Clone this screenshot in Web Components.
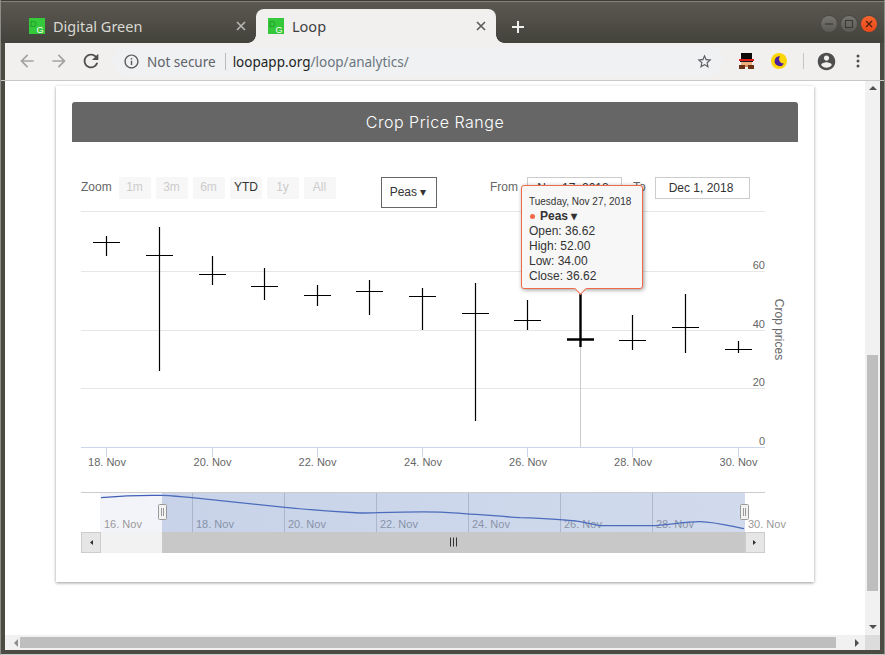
<!DOCTYPE html>
<html>
<head>
<meta charset="utf-8">
<title>Loop</title>
<style>
  html, body { margin: 0; padding: 0; background: #8a8a86; overflow: hidden; }
</style>
</head>
<body>
<browser-window>
  <browser-tabs slot="tabs"></browser-tabs>
  <browser-toolbar slot="toolbar"></browser-toolbar>
  <chart-card title-text="Crop Price Range">
    <chart-panel></chart-panel>
  </chart-card>
</browser-window>

<script>
class BrowserWindow extends HTMLElement {
  constructor () {
    super()
    this.attachShadow({ mode: 'open' })
  }

  connectedCallback () {
    this.shadowRoot.innerHTML = /* html */`
    <style>
      :host {
        display: flex;
        flex-direction: column;
        box-sizing: border-box;
        width: 885px;
        height: 655px;
        border-left: 1px solid #8d8d88;
        border-right: 1px solid #8d8d88;
        border-bottom: 1px solid #c9c9c6;
        background: #4b4a43;
      }
      .body {
        flex: 1;
        display: flex;
        flex-direction: column;
        min-height: 0;
        padding: 0 4px 4px 4px;
      }
      .view {
        flex: 1;
        display: flex;
        min-height: 0;
      }
      .page {
        flex: 1;
        background: #fff;
        overflow: hidden;
      }
      .vbar {
        width: 15px;
        position: relative;
        background: #f1f1f1;
        display: flex;
        flex-direction: column;
        align-items: center;
        justify-content: space-between;
      }
      .vbar .thumb {
        position: absolute;
        left: 2px;
        top: 274px;
        width: 11px;
        height: 236px;
        background: #bebebe;
      }
      .hbar {
        position: relative;
        height: 15px;
        display: flex;
        align-items: center;
        background: #f1f1f1;
      }
      .hbar .thumb {
        width: 816px;
        height: 11px;
        margin-left: 15px;
        background: #bebebe;
      }
      .corner {
        width: 15px;
        height: 15px;
        margin-left: auto;
        background: #dcdcdc;
      }
      .tri { width: 0; height: 0; border-style: solid; border-color: transparent; }
      .up { border-width: 0 4px 4px; border-bottom-color: #505050; margin-top: 5px; }
      .down { border-width: 4px 4px 0; border-top-color: #505050; margin-bottom: 6px; }
      .left { position: absolute; left: 9px; border-width: 4px 4px 4px 0; border-right-color: #8e8e8e; }
      .right { margin-left: 19px; border-width: 4px 0 4px 4px; border-left-color: #505050; }
    </style>
    <slot name="tabs"></slot>
    <slot name="toolbar"></slot>
    <div class="body">
      <div class="view">
        <div class="page"><slot></slot></div>
        <div class="vbar">
          <div class="tri up"></div>
          <div class="thumb"></div>
          <div class="tri down"></div>
        </div>
      </div>
      <div class="hbar">
        <div class="tri left"></div>
        <div class="thumb"></div>
        <div class="tri right"></div>
        <div class="corner"></div>
      </div>
    </div>
    `
  }
}

const faviconSvg = /* html */`
  <svg class="fav" width="16" height="16" viewBox="0 0 16 16">
    <rect width="16" height="16" fill="#35c83a"/>
    <text x="1" y="8.5" font-size="9" font-family="Liberation Sans, sans-serif" fill="#1f9a2a">D</text>
    <text x="7.5" y="15" font-size="9" font-family="Liberation Sans, sans-serif" fill="#fff">G</text>
  </svg>`

class BrowserTabs extends HTMLElement {
  constructor () {
    super()
    this.attachShadow({ mode: 'open' })
  }

  connectedCallback () {
    this.shadowRoot.innerHTML = /* html */`
    <style>
      :host {
        display: flex;
        align-items: flex-end;
        box-sizing: border-box;
        height: 43px;
        padding-left: 15px;
        background: linear-gradient(#5b5850, #44433b);
        border-top: 1px solid #3c3b36;
        box-shadow: inset 0 1px 0 #85837c;
        font: 14.5px "Noto Sans", sans-serif;
      }
      .tab {
        position: relative;
        box-sizing: border-box;
        width: 240px;
        height: 34px;
        display: flex;
        align-items: center;
        padding: 0 8px 0 12px;
        gap: 8px;
        color: #d9d8d2;
        border-radius: 8px 8px 0 0;
      }
      .tab.first { padding-left: 13px; }
      .tab.active {
        background: #f1f0ef;
        color: #3f3f3f;
      }
      .tab.active::before, .tab.active::after {
        content: '';
        position: absolute;
        bottom: 0;
        width: 8px;
        height: 8px;
      }
      .tab.active::before { left: -8px; background: radial-gradient(circle at 0 0, transparent 7.5px, #f1f0ef 8px); }
      .tab.active::after { right: -8px; background: radial-gradient(circle at 100% 0, transparent 7.5px, #f1f0ef 8px); }
      .name { flex: 1; padding-bottom: 1px; }
      .x { width: 14px; height: 14px; }
      .plus { margin: 0 0 9px 15px; width: 14px; height: 14px; }
      .controls {
        display: flex;
        gap: 4px;
        margin-left: auto;
        margin-right: 7px;
        align-self: flex-start;
        margin-top: 15px;
      }
      .wbtn {
        width: 16px;
        height: 16px;
        border-radius: 50%;
        background: linear-gradient(#76756f, #5a5953);
        box-shadow: 0 0 0 1px #494841;
        display: flex;
        align-items: center;
        justify-content: center;
      }
      .wbtn.close { background: linear-gradient(#f5642f, #e9481a); }
    </style>
    <div class="tab first">
      ${faviconSvg}
      <span class="name">Digital Green</span>
      <svg class="x" viewBox="0 0 14 14"><path d="M3 3l8 8M11 3l-8 8" stroke="#b9b8b2" stroke-width="1.6" fill="none"/></svg>
    </div>
    <div class="tab active">
      ${faviconSvg}
      <span class="name">Loop</span>
      <svg class="x" viewBox="0 0 14 14"><path d="M3 3l8 8M11 3l-8 8" stroke="#5a5a5a" stroke-width="1.6" fill="none"/></svg>
    </div>
    <svg class="plus" viewBox="0 0 14 14"><path d="M7 1v12M1 7h12" stroke="#f0f0ee" stroke-width="2" fill="none"/></svg>
    <div class="controls">
      <div class="wbtn"><svg width="10" height="10" viewBox="0 0 10 10"><path d="M1 5h8" stroke="#3b3a35" stroke-width="1.2"/></svg></div>
      <div class="wbtn"><svg width="10" height="10" viewBox="0 0 10 10"><rect x="1.5" y="1.5" width="7" height="7" fill="none" stroke="#3b3a35" stroke-width="1.1"/></svg></div>
      <div class="wbtn close"><svg width="10" height="10" viewBox="0 0 10 10"><path d="M2 2l6 6M8 2l-6 6" stroke="#4a1f0c" stroke-width="1.2"/></svg></div>
    </div>
    `
  }
}

class BrowserToolbar extends HTMLElement {
  constructor () {
    super()
    this.attachShadow({ mode: 'open' })
  }

  connectedCallback () {
    this.shadowRoot.innerHTML = /* html */`
    <style>
      :host {
        display: flex;
        align-items: center;
        box-sizing: border-box;
        height: 38px;
        padding: 0 0 1px 10px;
        background: #f1f0ef;
        border-bottom: 1px solid #c8c8c8;
        box-shadow: inset 4px 0 0 #4b4a43, inset -4px 0 0 #4b4a43;
        font: 13.5px "Noto Sans", sans-serif;
      }
      .btn {
        width: 32px;
        height: 28px;
        flex: none;
        display: flex;
        align-items: center;
        justify-content: center;
      }
      .omni {
        box-sizing: border-box;
        width: 610px;
        height: 29px;
        margin-left: 6px;
        padding: 0 10px;
        border-radius: 15px;
        background: #eff1f3;
        display: flex;
        align-items: center;
        color: #5f6368;
      }
      .omni > span { padding-top: 1px; }
      .sep { width: 1px; height: 17px; background: #b9bbbd; margin: 0 7px 0 9px; padding: 0 !important; }
      .url b { font-weight: 400; color: #1d1f21; }
      .url { color: #6b7680; }
      .star { margin-left: auto; display: flex; padding: 0 !important; }
      .bar { width: 1px; height: 16px; background: #c4c4c4; margin: 0 6px 0 8px; flex: none; }
    </style>
    <div class="btn"><svg width="20" height="20" viewBox="0 0 24 24"><path fill="#a3a3a3" d="M20 11H7.83l5.59-5.59L12 4l-8 8 8 8 1.41-1.41L7.83 13H20v-2z"/></svg></div>
    <div class="btn"><svg width="20" height="20" viewBox="0 0 24 24"><path fill="#a3a3a3" d="M12 4l-1.41 1.41L16.17 11H4v2h12.17l-5.58 5.59L12 20l8-8z"/></svg></div>
    <div class="btn"><svg width="22" height="22" viewBox="0 0 24 24"><path fill="#4f4f4f" d="M17.65 6.35A7.958 7.958 0 0 0 12 4c-4.42 0-7.99 3.58-7.99 8s3.57 8 7.99 8c3.73 0 6.84-2.55 7.73-6h-2.08A5.99 5.99 0 0 1 12 18c-3.31 0-6-2.69-6-6s2.69-6 6-6c1.66 0 3.14.69 4.22 1.78L13 11h7V4l-2.35 2.35z"/></svg></div>
    <div class="omni">
      <svg width="17" height="17" viewBox="0 0 24 24" style="flex:none;margin-right:7px"><path fill="#5a5d60" d="M11 7h2v2h-2zm0 4h2v6h-2zm1-9C6.48 2 2 6.48 2 12s4.48 10 10 10 10-4.48 10-10S17.52 2 12 2zm0 18c-4.41 0-8-3.59-8-8s3.59-8 8-8 8 3.59 8 8-3.59 8-8 8z"/></svg>
      <span>Not secure</span>
      <span class="sep"></span>
      <span class="url"><b>loopapp.org</b>/loop/analytics/</span>
      <span class="star"><svg width="17" height="17" viewBox="0 0 24 24"><path fill="#5a5d60" d="M22 9.24l-7.19-.62L12 2 9.19 8.63 2 9.24l5.46 4.73L5.82 21 12 17.27 18.18 21l-1.63-7.03L22 9.24zM12 15.4l-3.76 2.27 1-4.28-3.32-2.88 4.38-.38L12 6.1l1.71 4.04 4.38.38-3.32 2.88 1 4.28L12 15.4z"/></svg></span>
    </div>
    <div class="btn" style="margin-left:7px">
      <svg width="15" height="16" viewBox="0 0 15 16" shape-rendering="crispEdges">
        <rect x="2" y="0" width="11" height="6" fill="#0c0c0c"/>
        <rect x="0" y="6" width="15" height="2" fill="#e0201c"/>
        <rect x="1" y="8" width="13" height="1" fill="#1a1a1a"/>
        <rect x="2" y="9" width="11" height="3" fill="#f0b080"/>
        <rect x="0" y="12" width="6" height="4" fill="#6b3316"/>
        <rect x="9" y="12" width="6" height="4" fill="#6b3316"/>
        <rect x="6" y="12" width="3" height="2" fill="#d58c58"/>
      </svg>
    </div>
    <div class="btn" style="margin-left:1px">
      <svg width="16" height="16" viewBox="0 0 16 16">
        <circle cx="8" cy="8" r="8" fill="#fbd606"/>
        <path d="M9 3.2a5 5 0 1 0 4 7.4A4.6 4.6 0 0 1 9 3.2z" fill="#4b1f9c"/>
      </svg>
    </div>
    <div class="bar"></div>
    <div class="btn"><svg width="21" height="21" viewBox="0 0 24 24"><path fill="#4f4f4f" d="M12 2C6.48 2 2 6.48 2 12s4.48 10 10 10 10-4.48 10-10S17.52 2 12 2zm0 3c1.66 0 3 1.34 3 3s-1.34 3-3 3-3-1.34-3-3 1.34-3 3-3zm0 14.2c-2.5 0-4.71-1.28-6-3.22.03-1.99 4-3.08 6-3.08 1.99 0 5.97 1.09 6 3.08-1.29 1.94-3.5 3.22-6 3.22z"/></svg></div>
    <div class="btn"><svg width="4" height="14" viewBox="0 0 4 14"><circle cx="2" cy="2" r="1.5" fill="#4f4f4f"/><circle cx="2" cy="7" r="1.5" fill="#4f4f4f"/><circle cx="2" cy="12" r="1.5" fill="#4f4f4f"/></svg></div>
    `
  }
}

class ChartCard extends HTMLElement {
  constructor () {
    super()
    this.attachShadow({ mode: 'open' })
  }

  connectedCallback () {
    this.shadowRoot.innerHTML = /* html */`
    <style>
      :host {
        display: block;
        box-sizing: border-box;
        width: 758px;
        height: 496px;
        margin: 5px 0 0 51px;
        padding: 16px 16px 0;
        background: #fff;
        box-shadow: 0 1px 3px rgba(0,0,0,.4);
      }
      .head {
        height: 40px;
        display: flex;
        align-items: center;
        justify-content: center;
        background: #666;
        color: #fff;
        border-radius: 3px 3px 0 0;
        font: 300 16px Inter, sans-serif;
        letter-spacing: .5px;
      }
    </style>
    <div class="head">${this.getAttribute('title-text')}</div>
    <slot></slot>
    `
  }
}

class RangeBar extends HTMLElement {
  constructor () {
    super()
    this.attachShadow({ mode: 'open' })
  }

  connectedCallback () {
    const ranges = ['1m', '3m', '6m', 'YTD', '1y', 'All']
    this.shadowRoot.innerHTML = /* html */`
    <style>
      :host {
        display: flex;
        align-items: flex-start;
        height: 31px;
        font: 12px "Liberation Sans", sans-serif;
        color: #666;
      }
      .label { line-height: 21px; }
      .zoom { width: 38px; }
      .ranges { display: flex; gap: 5px; }
      .ranges span {
        width: 32px;
        height: 22px;
        line-height: 20px;
        text-indent: -1px;
        text-align: center;
        border-radius: 2px;
        background: #f7f7f7;
        color: #ccc;
      }
      .ranges span.on { color: #333; text-indent: 0; }
      .crop {
        box-sizing: border-box;
        width: 56px;
        height: 31px;
        line-height: 29px;
        margin-left: 45px;
        padding-right: 2px;
        text-align: center;
        border: 1px solid #666;
        color: #333;
      }
      .from { margin-left: 54px; width: 36px; text-indent: -1px; }
      .to { margin-left: 11px; width: 22px; }
      .date {
        box-sizing: border-box;
        width: 95px;
        height: 22px;
        line-height: 20px;
        padding-right: 3px;
        text-align: center;
        border: 1px solid #ccc;
        color: #333;
      }
    </style>
    <span class="label zoom">Zoom</span>
    <div class="ranges">
      ${ranges.map(r => `<span class="${r === 'YTD' ? 'on' : ''}">${r}</span>`).join('')}
    </div>
    <div class="crop">Peas ▾</div>
    <span class="label from">From</span>
    <div class="date">Nov 17, 2018</div>
    <span class="label to">To</span>
    <div class="date">Dec 1, 2018</div>
    `
  }
}

class CandlePlot extends HTMLElement {
  constructor () {
    super()
    this.attachShadow({ mode: 'open' })
  }

  connectedCallback () {
    // x, wick top, wick bottom, tick y  (page pixels, the viewBox starts at the plot's corner)
    const candles = [
      [106.5, 236, 256, 242],
      [159.5, 227, 371, 255],
      [212.5, 256, 285, 274],
      [264.5, 268, 300, 286],
      [317.5, 285, 306, 295],
      [369.5, 280, 315, 291],
      [422.5, 288, 330, 296],
      [475.5, 283, 421, 313],
      [527.5, 300, 330, 320],
      [580.5, 293, 347, 339],
      [632.5, 315, 350, 340],
      [685.5, 294, 353, 327],
      [738.5, 341, 353, 349]
    ]
    const ticks = [[107, '18. Nov'], [212.5, '20. Nov'], [317.5, '22. Nov'], [423, '24. Nov'], [528, '26. Nov'], [633, '28. Nov'], [738.5, '30. Nov']]
    const grid = [211.5, 271.5, 330.5, 388.5]
    const yLabels = [[269, '60'], [328, '40'], [386, '20'], [445, '0']]
    const navLabels = [[104, '16. Nov'], [196, '18. Nov'], [288, '20. Nov'], [380, '22. Nov'], [472, '24. Nov'], [564, '26. Nov'], [656, '28. Nov'], [748, '30. Nov']]
    const navGrid = [192.5, 284.5, 376.5, 468.5, 560.5, 652.5]

    const candleSvg = candles.map(([x, top, bot, y], i) => {
      const w = i === 9 ? 2.4 : 1.2
      return `<path d="M${x} ${top}V${bot}M${x - 13.5} ${y + 0.5}H${x + 13.5}" stroke="#000" stroke-width="${w}" fill="none"/>`
    }).join('')

    this.shadowRoot.innerHTML = /* html */`
    <style>
      :host { display: block; height: 352px; }
      svg { display: block; }
      text { font: 11px "Liberation Sans", sans-serif; fill: #666; }
      .nav { fill: #999; }
      .title { font-size: 12px; }
    </style>
    <svg width="720" height="352" viewBox="81 208 720 352">
      <defs>
        <linearGradient id="mask" x1="0" x2="1" y1="0" y2="0">
          <stop offset="0" stop-color="#6685c2" stop-opacity=".36"/>
          <stop offset="1" stop-color="#6685c2" stop-opacity=".3"/>
        </linearGradient>
      </defs>

      ${grid.map(y => `<path d="M81 ${y}H765" stroke="#e6e6e6"/>`).join('')}
      <path d="M580.5 293V447" stroke="#ccc"/>
      <path d="M81 447.5H765" stroke="#ccd6eb"/>
      ${ticks.map(([x]) => `<path d="M${Math.floor(x) - 0.5 + (x % 1 ? 1 : 0)} 447V457" stroke="#ccd6eb"/>`).join('')}
      ${ticks.map(([x, t]) => `<text x="${x}" y="466" text-anchor="middle">${t}</text>`).join('')}
      ${yLabels.map(([y, t]) => `<text x="765" y="${y}" text-anchor="end">${t}</text>`).join('')}
      <text class="title" transform="translate(775 329.5) rotate(90)" text-anchor="middle">Crop prices</text>
      ${candleSvg}

      <rect x="100" y="492" width="62" height="40" fill="#f3f4fa"/>
      ${navGrid.map(x => `<path d="M${x} 493V532" stroke="#d0d0d0"/>`).join('')}
      ${navLabels.map(([x, t]) => `<text class="nav" x="${x}" y="528">${t}</text>`).join('')}
      <path d="M101 497.7C120 496 140 495 162 495.4C175 496 185 497 192 497.7L285 507.3C310 510 335 511.5 360 513C385 512.5 420 511 445 512.3C470 513.7 495 516 520 517.7C545 518.5 565 519.5 580 521.7L600 525.7H652C665 525.5 685 521.5 700 521.7C715 522 730 526 744 528.7" fill="none" stroke="#3f5fb8" stroke-width="1.3"/>
      <rect x="162" y="493" width="583" height="39" fill="url(#mask)"/>
      <path d="M81 492.5H765" stroke="#ccc"/>

      <rect x="81.5" y="532.5" width="19" height="20" fill="#e6e6e6" stroke="#ccc"/>
      <rect x="101" y="532" width="61" height="21" fill="#f2f2f2"/>
      <rect x="162" y="532" width="583" height="21" fill="#c8c8c8"/>
      <rect x="745.5" y="532.5" width="19" height="20" fill="#e6e6e6" stroke="#ccc"/>
      <path d="M93 540v5l-3-2.5zM753 540v5l3-2.5z" fill="#333"/>
      <path d="M450.5 537.5v9M453.5 537.5v9M456.5 537.5v9" stroke="#333" fill="none"/>

      <rect x="158.5" y="504.5" width="8" height="15" rx="1" fill="#f2f2f2" stroke="#999"/>
      <path d="M161.5 508v8M163.5 508v8" stroke="#999"/>
      <rect x="740.5" y="504.5" width="8" height="15" rx="1" fill="#f2f2f2" stroke="#999"/>
      <path d="M743.5 508v8M745.5 508v8" stroke="#999"/>
    </svg>
    `
  }
}

class PriceTooltip extends HTMLElement {
  constructor () {
    super()
    this.attachShadow({ mode: 'open' })
  }

  connectedCallback () {
    this.shadowRoot.innerHTML = /* html */`
    <style>
      :host {
        display: block;
        position: absolute;
        box-sizing: border-box;
        width: 122px;
        height: 104px;
        padding: 9px 7px 0;
        background: #f7f7f7;
        border: 1px solid #f2694a;
        border-radius: 3px;
        box-shadow: 1px 1px 4px rgba(0,0,0,.4);
        font: 12px/15px "Liberation Sans", sans-serif;
        color: #333;
        white-space: nowrap;
      }
      :host::after {
        content: '';
        position: absolute;
        left: 54px;
        bottom: -5px;
        width: 8px;
        height: 8px;
        background: #f7f7f7;
        border-right: 1px solid #f2694a;
        border-bottom: 1px solid #f2694a;
        transform: rotate(45deg);
      }
      .date { font-size: 10px; line-height: 13px; margin-bottom: 1px; }
      .dot {
        display: inline-block;
        width: 5px;
        height: 5px;
        margin: 0 5px 1px 1px;
        border-radius: 50%;
        background: #f2694a;
      }
      b { font-weight: 700; }
    </style>
    <div class="date">Tuesday, Nov 27, 2018</div>
    <div><span class="dot"></span><b>Peas ▾</b></div>
    <slot></slot>
    `
  }
}

class ChartPanel extends HTMLElement {
  constructor () {
    super()
    this.attachShadow({ mode: 'open' })
  }

  connectedCallback () {
    this.shadowRoot.innerHTML = /* html */`
    <style>
      :host {
        display: block;
        position: relative;
        padding: 35px 0 0 9px;
      }
      price-tooltip { left: 449px; top: 43px; }
    </style>
    <range-bar></range-bar>
    <candle-plot></candle-plot>
    <price-tooltip>
      <div>Open: 36.62</div>
      <div>High: 52.00</div>
      <div>Low: 34.00</div>
      <div>Close: 36.62</div>
    </price-tooltip>
    `
  }
}

customElements.define('browser-window', BrowserWindow)
customElements.define('browser-tabs', BrowserTabs)
customElements.define('browser-toolbar', BrowserToolbar)
customElements.define('chart-card', ChartCard)
customElements.define('range-bar', RangeBar)
customElements.define('candle-plot', CandlePlot)
customElements.define('price-tooltip', PriceTooltip)
customElements.define('chart-panel', ChartPanel)
</script>
</body>
</html>
